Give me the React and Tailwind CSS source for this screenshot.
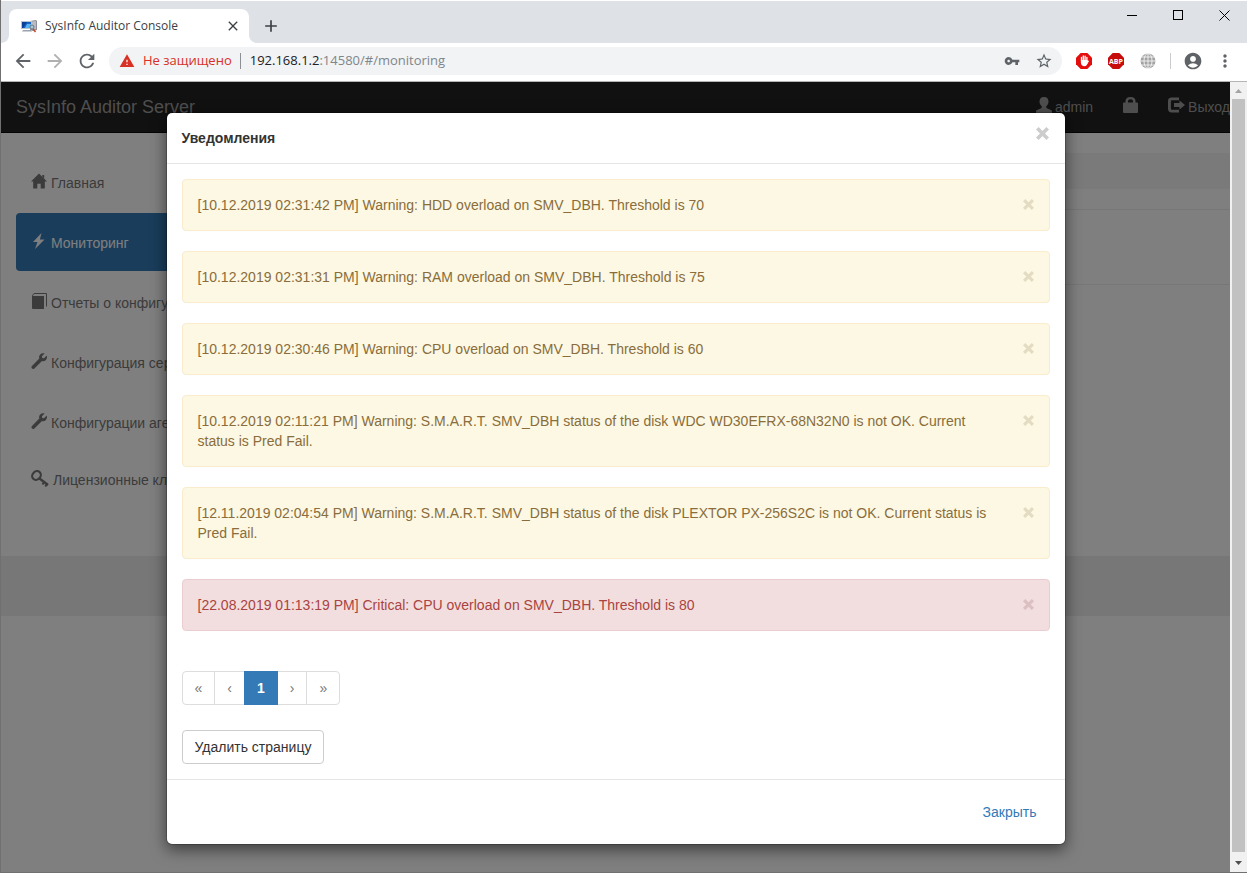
import {
  MdAccountCircle,
  MdAdd,
  MdArrowBack,
  MdArrowForward,
  MdClose,
  MdMoreVert,
  MdRefresh,
  MdStarBorder,
  MdVpnKey,
  MdWarning,
} from 'react-icons/md'

const uiFont = "font-['Open_Sans','Noto_Sans',sans-serif]"
const pageFont = "font-['Liberation_Sans',Arial,sans-serif]"

const menu = [
  { label: 'Главная', icon: HomeIcon },
  { label: 'Мониторинг', icon: FlashIcon, active: true },
  { label: 'Отчеты о конфигурации', icon: BookIcon },
  { label: 'Конфигурация сервера', icon: WrenchIcon },
  { label: 'Конфигурации агентов', icon: WrenchIcon },
  { label: 'Лицензионные ключи', icon: KeyIcon, wide: true },
]

const notifications = [
  { level: 'warning', text: '[10.12.2019 02:31:42 PM] Warning: HDD overload on SMV_DBH. Threshold is 70' },
  { level: 'warning', text: '[10.12.2019 02:31:31 PM] Warning: RAM overload on SMV_DBH. Threshold is 75' },
  { level: 'warning', text: '[10.12.2019 02:30:46 PM] Warning: CPU overload on SMV_DBH. Threshold is 60' },
  {
    level: 'warning',
    text: '[10.12.2019 02:11:21 PM] Warning: S.M.A.R.T. SMV_DBH status of the disk WDC WD30EFRX-68N32N0 is not OK. Current status is Pred Fail.',
  },
  {
    level: 'warning',
    text: '[12.11.2019 02:04:54 PM] Warning: S.M.A.R.T. SMV_DBH status of the disk PLEXTOR PX-256S2C is not OK. Current status is Pred Fail.',
  },
  { level: 'critical', text: '[22.08.2019 01:13:19 PM] Critical: CPU overload on SMV_DBH. Threshold is 80' },
]

const pages = ['«', '‹', '1', '›', '»']

function HomeIcon() {
  return (
    <svg width="16" height="16" viewBox="0 0 17 16" fill="currentColor">
      <path d="M8.500 0 17 8.600h-2.300V16h-4.400v-5H6.700v5H2.300V8.600H0L8.500 0Z" />
      <path d="M12 1.500h2v4L12 3.500Z" />
    </svg>
  )
}

function FlashIcon() {
  return (
    <svg width="16" height="16" viewBox="0 0 16 16" fill="currentColor">
      <path d="M10.500 0 2 9h4.500L4 16l9.500-9.600H8.900L10.500 0Z" />
    </svg>
  )
}

function BookIcon() {
  return (
    <svg width="16" height="16" viewBox="0 0 16 16" fill="currentColor">
      <path d="M1 3h12v13H2a1 1 0 0 1-1-1V3Z" />
      <path d="M1.500 3.500c0-2 1.200-3 2.500-3h11.500v13" fill="none" stroke="currentColor" />
    </svg>
  )
}

function WrenchIcon() {
  return (
    <svg width="16" height="16" viewBox="0 0 16 16" fill="currentColor">
      <path d="M13.600.6 10.900 3.200l.4 1.700 1.700.4L15.700 2.600c.6 1.900.2 3.500-1 4.600-1 1-2.500 1.200-3.700.8L3.400 15.400c-.7.7-1.700.7-2.400.1-.7-.7-.8-1.700 0-2.400L8.300 5.400C7.800 4 8.100 2.600 9.200 1.500 10.400.3 12 .1 13.600.6Z" />
    </svg>
  )
}

function KeyIcon() {
  return (
    <svg width="18" height="17" viewBox="0 0 18 17" fill="none" stroke="currentColor">
      <ellipse cx="5.500" cy="5.500" rx="4" ry="4.600" strokeWidth="2.200" transform="rotate(45 5.500 5.500)" />
      <path d="m8.500 8.500 8.500 6.500" strokeWidth="2.400" />
      <path d="m13.500 11.500-2 3M16.300 13.500l-2 3" strokeWidth="2" />
    </svg>
  )
}

function UserIcon() {
  return (
    <svg width="16" height="16" viewBox="0 0 16 16" fill="currentColor">
      <path d="M8 0c3.100 0 4.500 1.800 4.500 4.500 0 2-.9 3.700-2.200 4.700v1.200c0 .4.200.7.600.9l4 1.700c.8.4 1.100.9 1.100 1.600V16H0v-1.400c0-.7.300-1.200 1.100-1.600l4-1.700c.4-.2.600-.5.600-.9V9.200C4.400 8.200 3.500 6.500 3.500 4.500 3.500 1.800 4.900 0 8 0Z" />
    </svg>
  )
}

function LockIcon() {
  return (
    <svg width="15" height="16" viewBox="0 0 15 16" fill="currentColor">
      <path d="M2.500 5.500V4C2.500 1.500 4.500 0 7.500 0s5 1.500 5 4v1.500H14a1 1 0 0 1 1 1V15a1 1 0 0 1-1 1H1a1 1 0 0 1-1-1V6.500a1 1 0 0 1 1-1h1.500Zm2.500 0h5V4.300C10 3 9 2.200 7.500 2.200S5 3 5 4.300v1.200Z" />
    </svg>
  )
}

function LogoutIcon() {
  return (
    <svg width="17" height="16" viewBox="0 0 17 16" fill="currentColor">
      <path d="M11 .5v2.700H4.200c-.9 0-1.300.4-1.300 1.300v7c0 .9.400 1.300 1.300 1.300H11v2.700H3.700C1.300 15.500 0 14.200 0 11.800V4.200C0 1.800 1.300.5 3.700.5H11Z" />
      <path d="M11.500 3.500 17 8l-5.500 4.500V10H6V6h5.500V3.500Z" />
    </svg>
  )
}

function RemoveIcon({ size }) {
  return (
    <svg width={size} height={size} viewBox="0 0 12 12" fill="none" stroke="currentColor" strokeWidth="3.400">
      <path d="m1.200 1.200 9.600 9.600M10.800 1.200l-9.600 9.600" />
    </svg>
  )
}

function Favicon() {
  return (
    <svg width="16" height="14" viewBox="0 0 16 14">
      <path d="M9 2l6-1 1 1v9l-4 1-3-1Z" fill="#8b8f94" />
      <path d="M11 2.500 15 2v8l-4 .5Z" fill="#b9bdc2" />
      <path d="M0 2h11v8H0Z" fill="#b8c4d2" />
      <path d="M1 3h9v6H1Z" fill="#1762c4" />
      <path d="M1 3h5L2 9H1Z" fill="#0b3f97" />
      <path d="M6 5h4v4H4Z" fill="#57b4f2" />
      <path d="M2 11h8l1 1.500H1Z" fill="#9aa3ad" />
      <circle cx="11" cy="8" r="2" fill="#a9c6da" stroke="#6b7785" />
      <path d="m12 10 2.500 3" stroke="#c4492f" strokeWidth="1.500" />
    </svg>
  )
}

function TabCorner({ flip }) {
  return (
    <svg width="8" height="8" viewBox="0 0 8 8" className={`self-end ${flip ? '-scale-x-100' : ''}`}>
      <path d="M8 0v8H0c4.400 0 8-3.600 8-8Z" fill="#fff" />
    </svg>
  )
}

function TabStrip() {
  return (
    <div className="flex h-[43px] border-t border-white bg-[#dee1e6]">
      <TabCorner />
      <div className="mt-2 flex w-60 items-center rounded-t-lg bg-white pr-2 pl-3 text-[#3c4043]">
        <Favicon />
        <span className="ml-2 grow text-xs">SysInfo Auditor Console</span>
        <button aria-label="Закрыть вкладку" className="grid size-4 place-items-center">
          <MdClose size={16} />
        </button>
      </div>
      <TabCorner flip />
      <button aria-label="Новая вкладка" className="ml-1 grid w-5 place-items-center pt-2 text-[#3c4043]">
        <MdAdd size={20} />
      </button>
      <div className="ml-auto flex h-7 text-black">
        <button aria-label="Свернуть" className="grid w-[46px] place-items-center">
          <span className="h-px w-[10px] bg-black" />
        </button>
        <button aria-label="Развернуть" className="grid w-[46px] place-items-center">
          <span className="size-[10px] border border-black" />
        </button>
        <button aria-label="Закрыть" className="grid w-[46px] place-items-center">
          <svg width="11" height="11" viewBox="0 0 11 11" stroke="currentColor">
            <path d="m.5.500 10 10M10.500.500l-10 10" />
          </svg>
        </button>
      </div>
    </div>
  )
}

function ToolButton({ label, className = '', children }) {
  return (
    <button aria-label={label} className={`grid h-7 w-8 place-items-center text-[#5f6368] ${className}`}>
      {children}
    </button>
  )
}

function Toolbar() {
  return (
    <div className="flex h-[39px] items-center border-b border-[#b6b4b6] bg-white px-1.5 pb-0.5">
      <ToolButton label="Назад">
        <MdArrowBack size={22} />
      </ToolButton>
      <ToolButton label="Вперёд" className="opacity-50">
        <MdArrowForward size={22} />
      </ToolButton>
      <ToolButton label="Обновить">
        <MdRefresh size={22} />
      </ToolButton>
      <div className="mx-1.5 flex h-7 grow items-center rounded-full bg-[#f1f3f4] pr-0.5 pl-2.5 text-[13px]">
        <MdWarning size={16} className="text-[#d93025]" />
        <span className="ml-2 text-[#d93025]">Не защищено</span>
        <span className="mr-[9px] ml-2 h-4 w-px bg-[#8c8f93]" />
        <div className="grow text-[#80868b]">
          <span className="text-[#202124]">192.168.1.2</span>:14580/#/monitoring
        </div>
        <ToolButton label="Пароли">
          <MdVpnKey size={16} />
        </ToolButton>
        <ToolButton label="Добавить в закладки">
          <MdStarBorder size={18} />
        </ToolButton>
      </div>
      <ToolButton label="AdBlock">
        <svg width="16" height="16" viewBox="0 0 16 16">
          <path d="M4.700 0h6.600L16 4.700v6.600L11.300 16H4.700L0 11.300V4.700Z" fill="#e40d0d" />
          <path d="M5.500 8V4.300M7.300 7V2.900M9.100 7V3.100M10.900 8V4.500M12.300 8.200l-1.500 2.300" stroke="#fff" strokeWidth="1.300" strokeLinecap="round" />
          <path d="M4.900 7h6.600v3c0 2-1.300 3.200-3.200 3.200S5 12 4.900 9.500Z" fill="#fff" />
        </svg>
      </ToolButton>
      <ToolButton label="Adblock Plus">
        <svg width="16" height="16" viewBox="0 0 16 16">
          <path d="M4.700 0h6.600L16 4.700v6.600L11.300 16H4.700L0 11.300V4.700Z" fill="#c70d0c" />
          <text x="8" y="10.700" textAnchor="middle" fontSize="7" fontWeight="700" fill="#fff" className="font-['Open_Sans']">
            ABP
          </text>
        </svg>
      </ToolButton>
      <ToolButton label="Переводчик">
        <svg width="16" height="16" viewBox="0 0 16 16">
          <circle cx="8" cy="8" r="7.500" fill="#a3a3a3" />
          <g fill="none" stroke="#f4f4f4" strokeWidth=".9">
            <path d="M8 0v16M0 8h16M1.500 4h13M1.500 12h13" />
            <ellipse cx="8" cy="8" rx="4" ry="7.500" />
          </g>
        </svg>
      </ToolButton>
      <span className="mx-1.5 h-4 w-px bg-[#c9cbce]" />
      <ToolButton label="Профиль">
        <MdAccountCircle size={20} />
      </ToolButton>
      <ToolButton label="Меню">
        <MdMoreVert size={20} />
      </ToolButton>
    </div>
  )
}

function Navbar() {
  return (
    <nav className="flex h-[51px] shrink-0 items-center justify-between border-b border-[#080808] bg-[#222] text-[#9d9d9d]">
      <a href="#/" className="pl-[15px] text-lg">
        SysInfo Auditor Server
      </a>
      <ul className="flex gap-[30px] text-sm">
        <li>
          <a href="#/profile" className="flex items-center gap-[3px]">
            <span className="pb-1">
              <UserIcon />
            </span>
            admin
          </a>
        </li>
        <li>
          <a href="#/password" aria-label="Сменить пароль" className="flex h-full items-center pb-1">
            <LockIcon />
          </a>
        </li>
        <li>
          <a href="#/logout" className="flex items-center gap-[3px]">
            <span className="pb-1">
              <LogoutIcon />
            </span>
            Выход
          </a>
        </li>
      </ul>
    </nav>
  )
}

function Sidebar() {
  return (
    <ul className="flex w-1/4 flex-col gap-0.5 px-[15px] text-sm">
      {menu.map((item) => (
        <li key={item.label}>
          <a
            href="#/"
            className={`flex items-center gap-1 rounded px-[15px] whitespace-nowrap ${
              item.wide ? 'h-[54px]' : 'h-[58px] pt-0.5'
            } ${item.active ? 'bg-[#337ab7] text-white' : 'text-[#777]'}`}
          >
            <span className="pb-1">
              <item.icon />
            </span>
            {item.label}
          </a>
        </li>
      ))}
    </ul>
  )
}

function Notification({ level, text }) {
  return (
    <div
      role="alert"
      className={`mb-5 flex items-start justify-between rounded border p-[15px] ${
        level === 'critical'
          ? 'border-[#ebccd1] bg-[#f2dede] text-[#a94442]'
          : 'border-[#faebcc] bg-[#fcf8e3] text-[#8a6d3b]'
      }`}
    >
      <p className="pr-5">{text}</p>
      <button
        aria-label="Удалить"
        className={`mt-1 ${level === 'critical' ? 'text-[#dcbfc0]' : 'text-[#e4dcc2]'}`}
      >
        <RemoveIcon size={11} />
      </button>
    </div>
  )
}

function NotificationsModal() {
  return (
    <div
      role="dialog"
      aria-labelledby="modal-title"
      className="w-full max-w-[900px] rounded-md border border-black/20 bg-white bg-clip-padding text-sm/5 text-[#333] shadow-[0_5px_15px_rgba(0,0,0,0.5)]"
    >
      <div className="flex items-start justify-between border-b border-[#e5e5e5] p-[15px]">
        <h4 id="modal-title" className="font-bold">
          Уведомления
        </h4>
        <button aria-label="Закрыть" className="-mt-px mr-px text-black/20">
          <RemoveIcon size={13} />
        </button>
      </div>

      <div className="p-[15px]">
        {notifications.map((item) => (
          <Notification key={item.text} {...item} />
        ))}

        <ul className="mt-10 flex">
          {pages.map((page) => (
            <li key={page} className="group -ml-px first:ml-0">
              <button
                className={`border px-3 py-1.5 group-first:rounded-l group-last:rounded-r ${
                  page === '1' ? 'relative border-[#337ab7] bg-[#337ab7] font-bold text-white' : 'border-[#ddd] text-[#777]'
                }`}
              >
                {page}
              </button>
            </li>
          ))}
        </ul>

        <button className="mt-[25px] block rounded border border-[#ccc] px-3 py-1.5">Удалить страницу</button>
      </div>

      <div className="flex justify-end border-t border-[#e5e5e5] p-[15px]">
        <button className="px-[13px] py-[7px] text-[#337ab7]">Закрыть</button>
      </div>
    </div>
  )
}

function Scrollbar() {
  return (
    <div className="flex w-[17px] shrink-0 flex-col items-center bg-[#f1f1f1]">
      <svg width="17" height="17" viewBox="0 0 17 17" fill="#a3a3a3">
        <path d="M5 11h7L8.500 7Z" />
      </svg>
      <div className="w-[13px] grow bg-[#c1c1c1]" />
      <svg width="17" height="20" viewBox="0 0 17 20" fill="#505050">
        <path d="M5 9h7l-3.500 4Z" />
      </svg>
    </div>
  )
}

export default function App() {
  return (
    <div className="flex h-screen flex-col border-b border-l border-[#707070]">
      <header className={uiFont}>
        <TabStrip />
        <Toolbar />
      </header>

      <div className={`flex min-h-0 grow ${pageFont}`}>
        <div className="relative flex min-w-0 grow flex-col overflow-hidden bg-white">
          <Navbar />
          <main className="flex h-[423px] shrink-0 pt-5">
            <Sidebar />
            <section className="grow">
              <div className="h-9 bg-[#f5f5f5]" />
              <div className="mt-5 h-[76px] border-y border-[#eee]" />
            </section>
          </main>
          <footer className="h-[60px] shrink-0 bg-[#eee]" />

          {/* Backdrop + dialog */}
          <div className="absolute inset-0 flex items-start justify-center bg-black/50 pt-[30px]">
            <NotificationsModal />
          </div>
        </div>
        <Scrollbar />
      </div>
    </div>
  )
}
